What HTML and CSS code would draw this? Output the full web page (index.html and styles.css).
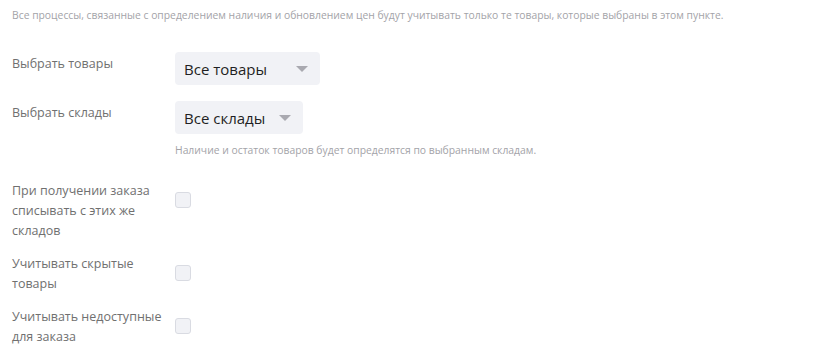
FILE: index.html
```html
<!DOCTYPE html>
<html lang="ru">
  <head>
    <meta charset="UTF-8" />
    <meta name="viewport" content="width=device-width, initial-scale=1.0" />
    <title>Настройки</title>
    <link rel="stylesheet" href="styles.css">
  </head>
  <body>
    <div class="settings">
      <p class="note">Все процессы, связанные с определением наличия и обновлением цен будут учитывать только те товары, которые выбраны в этом пункте.</p>

      <div class="row">
        <div class="label">Выбрать товары</div>
        <div class="control">
          <div class="select goods">
            <span>Все товары</span>
            <span class="caret"></span>
          </div>
        </div>
      </div>

      <div class="row">
        <div class="label">Выбрать склады</div>
        <div class="control">
          <div class="select stores">
            <span>Все склады</span>
            <span class="caret"></span>
          </div>
          <p class="hint">Наличие и остаток товаров будет определятся по выбранным складам.</p>
        </div>
      </div>

      <div class="row check-row first">
        <div class="label">При получении заказа списывать с этих же складов</div>
        <div class="control"><span class="checkbox"></span></div>
      </div>

      <div class="row check-row">
        <div class="label">Учитывать скрытые товары</div>
        <div class="control"><span class="checkbox"></span></div>
      </div>

      <div class="row check-row">
        <div class="label">Учитывать недоступные для заказа</div>
        <div class="control"><span class="checkbox"></span></div>
      </div>
    </div>
  </body>
</html>
```

FILE: styles.css
```css
body {
  margin: 0;
  background: #fff;
  font-family: "Open Sans", "Noto Sans", sans-serif;
}

.settings {
  padding: 7px 12px 0 12px;
}

.note {
  margin: 0 0 29px 0;
  font-size: 10.35px;
  line-height: 16px;
  color: #a3a3a8;
}

.row {
  display: flex;
  margin-bottom: 16px;
}

.label {
  width: 163px;
  flex-shrink: 0;
  padding-top: 2px;
  font-size: 12.5px;
  line-height: 20px;
  color: #707070;
}

.control {
  display: flex;
  flex-direction: column;
  align-items: flex-start;
}

.select {
  display: flex;
  align-items: center;
  box-sizing: border-box;
  height: 33px;
  padding: 0 12px 0 9px;
  border-radius: 4px;
  background: #f1f2f6;
  font-size: 15px;
  color: #1f1f23;
}

.select.goods {
  width: 145px;
}

.select.stores {
  width: 128px;
}

.caret {
  width: 0;
  height: 0;
  margin-left: auto;
  border-left: 6px solid transparent;
  border-right: 6px solid transparent;
  border-top: 6px solid #a9a9b0;
}

.hint {
  margin: 8px 0 0 0;
  font-size: 10.35px;
  line-height: 16px;
  color: #a3a3a8;
}

.check-row {
  margin-bottom: 13px;
}

.check-row.first {
  margin-top: 23px;
}

.check-row .label {
  padding-top: 0;
}

.checkbox {
  display: block;
  box-sizing: border-box;
  width: 16px;
  height: 16px;
  margin-top: 11px;
  border: 1px solid #d9dbe2;
  border-radius: 3px;
  background: #f1f2f6;
}
```
